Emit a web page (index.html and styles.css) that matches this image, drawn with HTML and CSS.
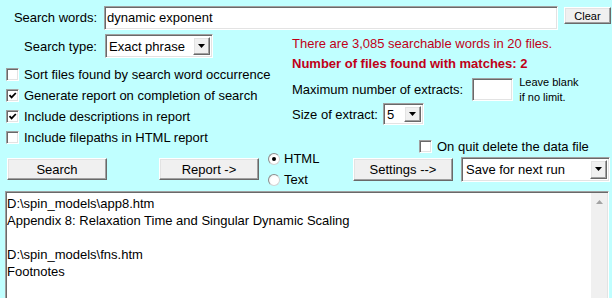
FILE: index.html
```html
<!DOCTYPE html>
<html lang="en">
<head>
  <meta charset="UTF-8" />
  <title>Search</title>
  <link rel="stylesheet" href="styles.css">
</head>
<body>
  <div class="app">
    <div class="search-row">
      <span class="field-label">Search words:</span>
      <div class="textbox query">dynamic exponent</div>
      <button class="btn btn-small">Clear</button>
    </div>

    <div class="middle">
      <div class="left-panel">
        <div class="type-row">
          <span class="field-label">Search type:</span>
          <div class="select type-select">
            <span class="select-value">Exact phrase</span>
            <span class="select-arrow"><svg width="7" height="4" viewBox="0 0 7 4"><polygon points="0,0 7,0 3.5,4" fill="#000"/></svg></span>
          </div>
        </div>
        <ul class="options">
          <li><span class="check"></span>Sort files found by search word occurrence</li>
          <li><span class="check"><svg width="9" height="9" viewBox="0 0 9 9"><path d="M1.5 4.2 L3.6 6.4 L7.8 2" fill="none" stroke="#000" stroke-width="1.8"/></svg></span>Generate report on completion of search</li>
          <li><span class="check"><svg width="9" height="9" viewBox="0 0 9 9"><path d="M1.5 4.2 L3.6 6.4 L7.8 2" fill="none" stroke="#000" stroke-width="1.8"/></svg></span>Include descriptions in report</li>
          <li><span class="check"></span>Include filepaths in HTML report</li>
        </ul>
      </div>

      <div class="right-panel">
        <p class="info">There are 3,085 searchable words in 20 files.</p>
        <p class="info strong">Number of files found with matches: 2</p>
        <div class="extract-row">
          <span>Maximum number of extracts:</span>
          <div class="textbox max-box"></div>
          <span class="hint">Leave blank<br>if no limit.</span>
        </div>
        <div class="size-row">
          <span>Size of extract:</span>
          <div class="select size-select">
            <span class="select-value">5</span>
            <span class="select-arrow"><svg width="7" height="4" viewBox="0 0 7 4"><polygon points="0,0 7,0 3.5,4" fill="#000"/></svg></span>
          </div>
        </div>
        <div class="quit-row"><span class="check"></span>On quit delete the data file</div>
      </div>
    </div>

    <div class="actions">
      <button class="btn">Search</button>
      <button class="btn report">Report -&gt;</button>
      <div class="format">
        <div class="format-item"><span class="radio on"></span>HTML</div>
        <div class="format-item"><span class="radio"></span>Text</div>
      </div>
      <button class="btn settings">Settings --&gt;</button>
      <div class="select save-select">
        <span class="select-value">Save for next run</span>
        <span class="select-arrow"><svg width="7" height="4" viewBox="0 0 7 4"><polygon points="0,0 7,0 3.5,4" fill="#000"/></svg></span>
      </div>
    </div>

    <div class="output">
      <div class="output-text">
        D:\spin_models\app8.htm<br>
        Appendix 8: Relaxation Time and Singular Dynamic Scaling<br>
        <br>
        D:\spin_models\fns.htm<br>
        Footnotes
      </div>
      <div class="scrollbar">
        <span class="scroll-up"><svg width="7" height="4" viewBox="0 0 7 4"><polygon points="0,4 3.5,0 7,4" fill="#a3a3a3"/></svg></span>
      </div>
    </div>
  </div>
</body>
</html>
```

FILE: styles.css
```css
:root {
  --bg: #c0ffff;
  --face: #f0f0f0;
  --shadow: #a0a0a0;
  --dark: #696969;
  --light: #e3e3e3;
  --red: #c00018;
}

html {
  overflow: hidden;
}

body {
  margin: 0;
  background-color: var(--bg);
  color: #000;
  font-family: 'Liberation Sans', Arial, sans-serif;
  font-size: 13px;
}

.app {
  width: 612px;
  height: 298px;
  overflow: hidden;
  padding-top: 6px;
  box-sizing: border-box;
}

/* sunken and raised 3D edges */
.textbox,
.select,
.check,
.output {
  background-color: #fff;
  border: 1px solid;
  border-color: var(--shadow) #fff #fff var(--shadow);
  box-shadow: inset 1px 1px 0 var(--dark), inset -1px -1px 0 var(--light);
  box-sizing: border-box;
}

.btn,
.select-arrow {
  background-color: var(--face);
  border: 1px solid;
  border-color: #fff var(--dark) var(--dark) #fff;
  box-shadow: inset -1px -1px 0 var(--shadow), inset 1px 1px 0 var(--light);
  box-sizing: border-box;
}

.btn {
  font-family: inherit;
  font-size: 13px;
  color: #000;
  padding: 0;
  width: 100px;
  height: 22px;
  flex: none;
}

.search-row {
  display: flex;
  align-items: flex-start;
  height: 24px;
}

.field-label {
  width: 97px;
  flex: none;
  text-align: right;
  line-height: 23px;
}

.query {
  margin-left: 7px;
  width: 454px;
  height: 24px;
  padding: 0 2px;
  line-height: 22px;
}

.btn-small {
  margin-left: 6px;
  margin-top: 1px;
  width: 47px;
  height: 17px;
  font-size: 11px;
}

.middle {
  display: flex;
}

.left-panel {
  width: 286px;
  flex: none;
}

.type-row {
  display: flex;
  align-items: center;
  margin-top: 4px;
  height: 24px;
}

.select {
  display: flex;
  align-items: stretch;
  padding: 2px;
  flex: none;
}

.select-value {
  flex: 1;
  padding-left: 1px;
  display: flex;
  align-items: center;
  white-space: nowrap;
}

.select-arrow {
  width: 17px;
  display: flex;
  align-items: center;
  justify-content: center;
}

.type-select {
  margin-left: 8px;
  width: 108px;
  height: 24px;
}

.options {
  list-style: none;
  margin: 6px 0 0;
  padding: 0 0 0 6px;
}

.options li,
.quit-row {
  display: flex;
  align-items: center;
  height: 21px;
  white-space: nowrap;
}

.check {
  width: 13px;
  height: 13px;
  margin-right: 5px;
  flex: none;
  display: flex;
  align-items: center;
  justify-content: center;
}

.right-panel {
  margin-left: 6px;
  flex: 1;
}

.info {
  margin: 0;
  line-height: 20px;
  color: var(--red);
  white-space: nowrap;
}

.info:first-child {
  margin-top: 4px;
}

.strong {
  font-weight: bold;
}

.extract-row {
  display: flex;
  align-items: center;
  margin-top: 4px;
  height: 23px;
}

.max-box {
  margin-left: 9px;
  width: 41px;
  height: 23px;
}

.hint {
  margin-left: 6px;
  font-size: 11px;
  line-height: 15px;
}

.size-row {
  display: flex;
  align-items: center;
  margin-top: 2px;
  height: 22px;
}

.size-select {
  margin-left: 5px;
  width: 41px;
  height: 22px;
}

.quit-row {
  margin-top: 14px;
  height: 14px;
  padding-left: 127px;
}

.actions {
  display: flex;
  align-items: center;
  height: 26px;
  margin-top: 3px;
  padding-left: 7px;
}

.report {
  margin-left: 52px;
}

.format {
  margin-left: 9px;
  width: 85px;
  flex: none;
  display: flex;
  flex-direction: column;
}

.format-item {
  display: flex;
  align-items: center;
  height: 21px;
}

.radio {
  width: 12px;
  height: 12px;
  margin-right: 4px;
  border-radius: 50%;
  box-sizing: border-box;
  border: 1px solid #8d8d8d;
  border-right-color: #d4d4d4;
  border-bottom-color: #d4d4d4;
  background: radial-gradient(circle at 60% 60%, #fff 45%, #e6e6e6 100%);
  display: flex;
  align-items: center;
  justify-content: center;
}

.radio.on::after {
  content: '';
  width: 4px;
  height: 4px;
  border-radius: 50%;
  background-color: #000;
}

.settings {
  height: 23px;
}

.save-select {
  margin-left: 8px;
  width: 149px;
  height: 25px;
}

.save-select .select-value {
  padding-left: 2px;
}

.output {
  margin: 9px 3px 0 5px;
  height: 130px;
  display: flex;
}

.output-text {
  flex: 1;
  padding: 3px 1px 0 1px;
  line-height: 17px;
  white-space: nowrap;
}

.scrollbar {
  width: 16px;
  margin: 1px 1px 1px 0;
  background-color: var(--face);
}

.scroll-up {
  display: flex;
  align-items: center;
  justify-content: center;
  height: 17px;
}
```
